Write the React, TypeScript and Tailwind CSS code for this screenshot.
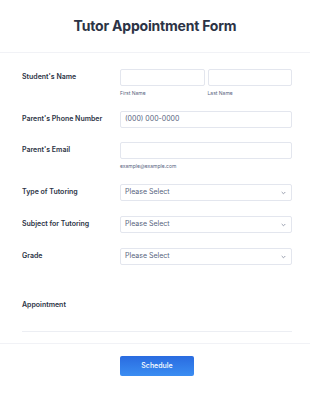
const font = { fontFamily: "Inter, 'Noto Sans', sans-serif" };

function Chevron() {
  return (
    <svg width="5" height="4" viewBox="0 0 5 4" className="text-[#8c93a4]">
      <path d="M0.7 1 L2.5 2.8 L4.3 1" fill="none" stroke="currentColor" strokeWidth="0.9" />
    </svg>
  );
}

function Label({ children }: { children: React.ReactNode }) {
  return (
    <div className="w-[98px] h-[17px] flex items-center text-[7px] font-semibold text-[#2c3345]">
      {children}
    </div>
  );
}

function Input({ text, className = "" }: { text?: string; className?: string }) {
  return (
    <div
      className={`h-[17px] border border-[#e3e6ee] rounded-[2px] bg-white flex items-center px-[4px] text-[7px] text-[#2c3345] ${className}`}
    >
      {text}
    </div>
  );
}

function Select() {
  return (
    <div className="h-[17px] border border-[#e3e6ee] rounded-[2px] bg-white flex items-center justify-between pl-[4px] pr-[5px] text-[7px] text-[#57647e]">
      <span>Please Select</span>
      <Chevron />
    </div>
  );
}

export default function App() {
  return (
    <div className="w-[310px] h-[393px] bg-white overflow-hidden" style={font}>
      <div className="h-[53px] border-b border-[#f1f2f6] flex items-center justify-center pb-[1px]">
        <h1 className="text-[14px] font-bold text-[#2c3345] tracking-[-0.2px]">Tutor Appointment Form</h1>
      </div>

      <div className="pl-[22px] pr-[18px] pt-[16px]">
        <div className="h-[42px] flex">
          <Label>Student's Name</Label>
          <div className="flex-1 flex gap-[3px]">
            <div className="flex-1">
              <Input />
              <div className="mt-[4px] text-[5px] text-[#57647e]">First Name</div>
            </div>
            <div className="flex-1">
              <Input />
              <div className="mt-[4px] text-[5px] text-[#57647e]">Last Name</div>
            </div>
          </div>
        </div>

        <div className="h-[31px] flex">
          <Label>Parent's Phone Number</Label>
          <div className="flex-1">
            <Input text="(000) 000-0000" className="text-[#57647e]" />
          </div>
        </div>

        <div className="h-[42px] flex">
          <Label>Parent's Email</Label>
          <div className="flex-1">
            <Input />
            <div className="mt-[4px] text-[5px] text-[#57647e]">example@example.com</div>
          </div>
        </div>

        <div className="h-[32px] flex">
          <Label>Type of Tutoring</Label>
          <div className="flex-1">
            <Select />
          </div>
        </div>

        <div className="h-[32px] flex">
          <Label>Subject for Tutoring</Label>
          <div className="flex-1">
            <Select />
          </div>
        </div>

        <div className="h-[32px] flex">
          <Label>Grade</Label>
          <div className="flex-1">
            <Select />
          </div>
        </div>

        <div className="h-[52px] border-b border-[#eceef3] pt-[20px]">
          <div className="text-[7px] font-semibold text-[#2c3345] leading-[9px]">Appointment</div>
        </div>
      </div>

      <div className="mt-[11px] border-t border-[#f1f2f6] pt-[12px] flex">
        <div className="ml-[120px] w-[74px] h-[20px] rounded-[2px] bg-gradient-to-b from-[#2a6be0] to-[#3b8df2] flex items-center justify-center text-[7px] font-medium text-white">
          Schedule
        </div>
      </div>
    </div>
  );
}
